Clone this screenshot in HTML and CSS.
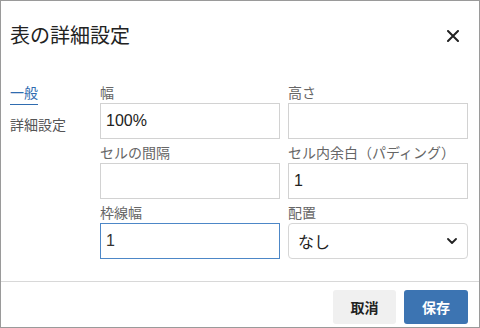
FILE: index.html
```html
<!DOCTYPE html>
<html lang="ja">
<head>
<meta charset="utf-8">
<link rel="stylesheet" href="styles.css">
</head>
<body>
<div class="dialog">
  <div class="header">
    <h1 class="title">表の詳細設定</h1>
    <button class="close" aria-label="閉じる">
      <svg width="12" height="12" viewBox="0 0 12 12"><path d="M1 1 L11 11 M11 1 L1 11" stroke="#222" stroke-width="2" stroke-linecap="round"/></svg>
    </button>
  </div>
  <div class="body">
    <nav class="nav">
      <span class="nav-item active">一般</span>
      <span class="nav-item">詳細設定</span>
    </nav>
    <div class="form">
      <div class="field">
        <label class="label">幅</label>
        <div class="input">100%</div>
      </div>
      <div class="field">
        <label class="label">高さ</label>
        <div class="input"></div>
      </div>
      <div class="field">
        <label class="label">セルの間隔</label>
        <div class="input"></div>
      </div>
      <div class="field">
        <label class="label">セル内余白（パディング）</label>
        <div class="input">1</div>
      </div>
      <div class="field">
        <label class="label">枠線幅</label>
        <div class="input focused">1</div>
      </div>
      <div class="field">
        <label class="label">配置</label>
        <div class="select">
          <span>なし</span>
          <svg width="10" height="6" viewBox="0 0 10 6"><path d="M1 1 L5 5 L9 1" fill="none" stroke="#222" stroke-width="1.8" stroke-linecap="round" stroke-linejoin="round"/></svg>
        </div>
      </div>
    </div>
  </div>
  <div class="footer">
    <button class="btn btn-cancel">取消</button>
    <button class="btn btn-save">保存</button>
  </div>
</div>
</body>
</html>
```
FILE: styles.css
```css
* { box-sizing: border-box; }
html, body { margin: 0; padding: 0; background: #fff; }
body {
  font-family: "Liberation Sans", "Noto Sans CJK JP", sans-serif;
  color: #222;
}
.dialog {
  width: 480px;
  height: 328px;
  border: 1px solid #9a9a9a;
  display: flex;
  flex-direction: column;
}
.header {
  height: 82px;
  display: flex;
  align-items: flex-start;
  justify-content: space-between;
  padding: 20px 20px 0 9px;
}
.title {
  margin: 0;
  font-size: 20px;
  font-weight: normal;
  line-height: 30px;
  color: #222;
}
.close {
  border: 0;
  background: none;
  padding: 0;
  margin-top: 9px;
  width: 12px;
  height: 12px;
  display: flex;
}
.body {
  flex: 1;
  display: flex;
  padding: 0 11px 0 9px;
}
.nav {
  width: 90px;
  display: flex;
  flex-direction: column;
  align-items: flex-start;
  gap: 10px;
  font-size: 14px;
  line-height: 20px;
}
.nav-item { color: #555; }
.nav-item.active {
  color: #2f6cb0;
  border-bottom: 1px solid #2f6cb0;
  padding-bottom: 1px;
  line-height: 20px;
}
.form {
  flex: 1;
  display: grid;
  grid-template-columns: 180px 180px;
  column-gap: 8px;
  row-gap: 4px;
  align-content: start;
}
.field { display: flex; flex-direction: column; }
.label {
  font-size: 14px;
  line-height: 20px;
  color: #666;
}
.input {
  height: 36px;
  border: 1px solid #d2d2d2;
  font-size: 16px;
  line-height: 34px;
  padding: 0 5px;
  color: #222;
}
.input.focused {
  border-color: #4d87c7;
  color: #333;
}
.select {
  height: 36px;
  border: 1px solid #d6d6d6;
  border-radius: 4px;
  display: flex;
  align-items: center;
  justify-content: space-between;
  padding: 0 10px 0 9px;
  font-size: 16px;
  color: #222;
}
.footer {
  border-top: 1px solid #d8d8d8;
  padding: 8px 11px 3px;
  display: flex;
  justify-content: flex-end;
  gap: 8px;
}
.btn {
  height: 34px;
  border: 0;
  border-radius: 3px;
  font-family: "Liberation Sans", "Noto Sans CJK JP", sans-serif;
  font-size: 14px;
  font-weight: bold;
  padding: 0;
}
.btn-cancel { width: 63px; background: #f0f0f0; color: #222; }
.btn-save { width: 64px; background: #3c74b2; color: #fff; }
```
